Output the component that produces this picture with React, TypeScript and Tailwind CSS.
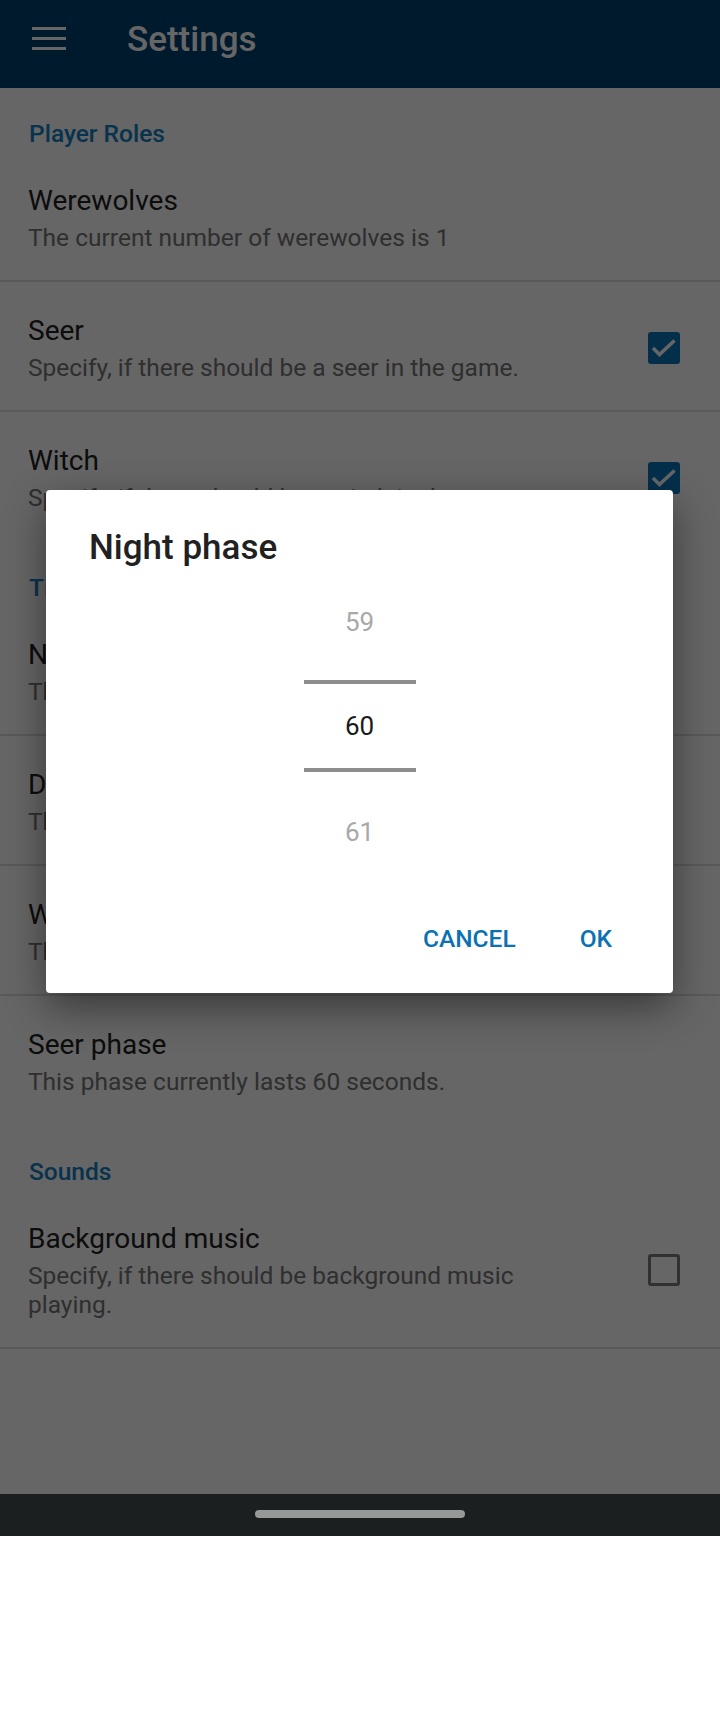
import React from 'react';

type Pref = {
  title: string;
  summary: string;
  checked?: boolean;
  divider?: boolean;
};

const sections: { name: string; items: Pref[] }[] = [
  {
    name: 'Player Roles',
    items: [
      { title: 'Werewolves', summary: 'The current number of werewolves is 1', divider: true },
      { title: 'Seer', summary: 'Specify, if there should be a seer in the game.', checked: true, divider: true },
      { title: 'Witch', summary: 'Specify, if there should be a witch in the game.', checked: true },
    ],
  },
  {
    name: 'Timers',
    items: [
      { title: 'Night phase', summary: 'This phase currently lasts 60 seconds.', divider: true },
      { title: 'Day phase', summary: 'This phase currently lasts 60 seconds.', divider: true },
      { title: 'Werewolf phase', summary: 'This phase currently lasts 60 seconds.', divider: true },
      { title: 'Seer phase', summary: 'This phase currently lasts 60 seconds.' },
    ],
  },
  {
    name: 'Sounds',
    items: [
      {
        title: 'Background music',
        summary: 'Specify, if there should be background music playing.',
        checked: false,
        divider: true,
      },
    ],
  },
];

function CheckBox({ checked }: { checked: boolean }) {
  if (checked) {
    return (
      <svg width="32" height="32" viewBox="0 0 32 32">
        <rect x="0" y="0" width="32" height="32" rx="3" fill="#0a76bc" />
        <path d="M5 16 L11.5 22.5 L26.5 8.5" fill="none" stroke="#ffffff" strokeWidth="3.6" />
      </svg>
    );
  }
  return <div className="w-[32px] h-[32px] rounded-[3px] border-[3px] border-[#7a7a7a]" />;
}

function PrefRow({ item }: { item: Pref }) {
  return (
    <div
      className={`flex items-center pl-[28px] pr-[40px] pt-[31px] ${
        item.divider ? 'pb-[28px] border-b-2 border-[#dedede]' : 'pb-[30px]'
      }`}
    >
      <div className="flex-1 pr-[60px]">
        <div className="text-[28px] leading-[36px] text-[#222222]">{item.title}</div>
        <div className="mt-[4px] text-[24.5px] leading-[29px] text-[#757575]">{item.summary}</div>
      </div>
      {item.checked !== undefined && <CheckBox checked={item.checked} />}
    </div>
  );
}

export default function App() {
  return (
    <div className="w-[720px] h-[1712px] flex flex-col bg-white font-[Roboto,sans-serif]">
      <div className="relative h-[1494px] overflow-hidden bg-white">
        {/* Toolbar */}
        <div className="h-[88px] bg-[#004370] flex items-center pb-[12px] pl-[32px]">
          <div className="flex flex-col gap-[7px]">
            <div className="w-[34px] h-[3px] bg-white" />
            <div className="w-[34px] h-[3px] bg-white" />
            <div className="w-[34px] h-[3px] bg-white" />
          </div>
          <div className="ml-[61px] mt-[3px] text-[35px] leading-[44px] font-medium text-white">Settings</div>
        </div>

        {/* Preference list */}
        {sections.map((section) => (
          <div key={section.name}>
            <div className="pl-[29px] pt-[31px] pb-[3px] text-[24.5px] leading-[30px] font-medium text-[#1580c4]">
              {section.name}
            </div>
            {section.items.map((item) => (
              <PrefRow key={item.title} item={item} />
            ))}
          </div>
        ))}

        {/* Scrim */}
        <div className="absolute inset-0 bg-black/60" />

        {/* Number picker dialog */}
        <div className="absolute left-[46px] top-[490px] w-[627px] bg-white rounded-[4px] shadow-[0_14px_40px_rgba(0,0,0,0.45)]">
          <div className="pt-[36px] pl-[43px] text-[35px] leading-[43px] font-medium text-[#212121]">Night phase</div>
          <div className="flex flex-col items-center">
            <div className="h-[111px] pt-[38px] text-[26px] leading-[30px] text-[#a8a8a8]">59</div>
            <div className="w-[112px] h-[4px] bg-[#8d8d8d]" />
            <div className="h-[84px] flex items-center text-[26px] leading-[30px] text-[#1a1a1a]">60</div>
            <div className="w-[112px] h-[4px] bg-[#8d8d8d]" />
            <div className="pt-[45px] text-[26px] leading-[30px] text-[#a8a8a8]">61</div>
          </div>
          <div className="mt-[77px] pb-[39px] pr-[61px] flex justify-end gap-[64px] text-[24.5px] leading-[30px] font-medium text-[#0a72b2]">
            <span>CANCEL</span>
            <span>OK</span>
          </div>
        </div>
      </div>

      {/* System navigation bar */}
      <div className="h-[42px] bg-[#1b1f20] flex justify-center pt-[16px]">
        <div className="w-[210px] h-[8px] rounded-full bg-[#979999]" />
      </div>
      <div className="flex-1 bg-white" />
    </div>
  );
}
